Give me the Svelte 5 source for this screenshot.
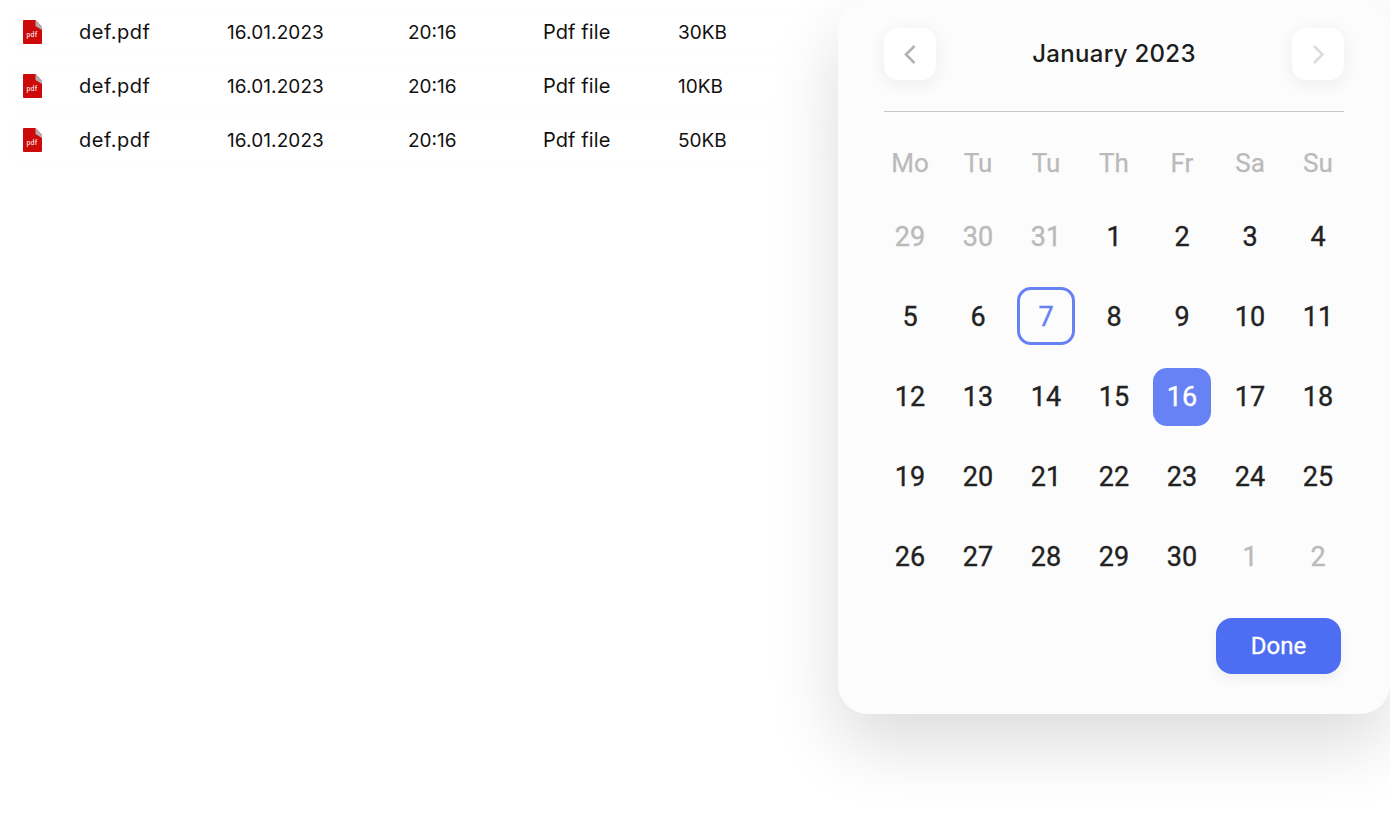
<script lang="ts">
    const files = [
        { name: "def.pdf", date: "16.01.2023", time: "20:16", type: "Pdf file", size: "30KB" },
        { name: "def.pdf", date: "16.01.2023", time: "20:16", type: "Pdf file", size: "10KB" },
        { name: "def.pdf", date: "16.01.2023", time: "20:16", type: "Pdf file", size: "50KB" }
    ];
    const weekdays = ["Mo", "Tu", "Tu", "Th", "Fr", "Sa", "Su"];
    const days = [
        { n: 29, muted: true }, { n: 30, muted: true }, { n: 31, muted: true },
        ...Array.from({ length: 30 }, (_, i) => ({ n: i + 1, muted: false })),
        { n: 1, muted: true }, { n: 2, muted: true }
    ];
</script>

<div class="page">
    <div class="files">
        {#each files as file}
            <div class="row">
                <span class="icon">
                    <svg width="19" height="24" viewBox="0 0 19 24">
                        <path d="M1 0H12.5L19 7V23a1 1 0 0 1-1 1H1a1 1 0 0 1-1-1V1a1 1 0 0 1 1-1Z" fill="#cd0a0a"/>
                        <path d="M12.5 0L19 7V10L12.5 6Z" fill="#b5aeae"/>
                        <text x="9" y="16.5" class="pdf">pdf</text>
                    </svg>
                </span>
                <span class="name">{file.name}</span>
                <span class="date">{file.date}</span>
                <span class="time">{file.time}</span>
                <span class="type">{file.type}</span>
                <span>{file.size}</span>
            </div>
        {/each}
    </div>

    <div class="calendar">
        <div class="head">
            <button class="nav prev" aria-label="Previous month">
                <svg width="14" height="20" viewBox="0 0 14 20"><path d="M11.5 2L3 10.5L11.5 19" /></svg>
            </button>
            <div class="title">January 2023</div>
            <button class="nav next" aria-label="Next month">
                <svg width="14" height="20" viewBox="0 0 14 20"><path d="M3 2L11.5 10.5L3 19" /></svg>
            </button>
        </div>
        <div class="weekdays">
            {#each weekdays as d}
                <span>{d}</span>
            {/each}
        </div>
        <div class="days">
            {#each days as day}
                <span
                    class="day"
                    class:muted={day.muted}
                    class:today={!day.muted && day.n === 7}
                    class:selected={!day.muted && day.n === 16}
                >{day.n}</span>
            {/each}
        </div>
        <div class="foot">
            <button class="done">Done</button>
        </div>
    </div>
</div>

<style>
    :global(body) {
        background: #fff;
        overflow: hidden;
    }

    .page {
        display: flex;
        justify-content: space-between;
        align-items: flex-start;
        width: 1390px;
        height: 828px;
        overflow: hidden;
    }

    .files {
        display: flex;
        flex-direction: column;
        gap: 10px;
        padding: 10px 0 0 10px;
        font-family: "Inter", sans-serif;
        font-size: 19px;
        color: #111;
    }

    .row {
        box-sizing: border-box;
        display: flex;
        align-items: center;
        width: 817px;
        height: 44px;
        padding-left: 12px;
        border: 1px solid #fdfdfd;
        border-radius: 16px;
    }

    .row span {
        white-space: nowrap;
    }

    .icon {
        display: flex;
        width: 56px;
    }

    .pdf {
        font-family: "Roboto", sans-serif;
        font-size: 7px;
        font-weight: 500;
        letter-spacing: 0.3px;
        fill: #f7dcdc;
        text-anchor: middle;
    }

    .name { width: 148px; font-size: 20px; letter-spacing: 0.5px; }
    .date { width: 181px; letter-spacing: 0.1px; }
    .time { width: 135px; }
    .type { width: 135px; font-size: 20px; letter-spacing: 0.1px; }

    .calendar {
        box-sizing: border-box;
        width: 552px;
        height: 714px;
        padding: 28px 46px 0;
        background: #fcfcfd;
        border-radius: 30px;
        box-shadow: 0 30px 70px rgba(0, 0, 0, 0.14);
        font-family: "Roboto", sans-serif;
    }

    .head {
        display: flex;
        align-items: flex-start;
        justify-content: space-between;
        height: 83px;
        border-bottom: 1px solid #c6c6cb;
    }

    .nav {
        display: flex;
        align-items: center;
        justify-content: center;
        width: 52px;
        height: 52px;
        padding: 0;
        border: none;
        border-radius: 14px;
        background: #fff;
        box-shadow: 0 4px 16px 2px rgba(0, 0, 0, 0.05);
    }

    .nav path {
        fill: none;
        stroke-width: 2.6;
    }

    .prev path { stroke: #b3b3b3; }
    .next path { stroke: #dcdcdf; }

    .title {
        height: 52px;
        line-height: 52px;
        font-family: "Inter", sans-serif;
        font-size: 24px;
        font-weight: 450;
        letter-spacing: 0.3px;
        color: #1c1c1c;
    }

    .weekdays, .days {
        display: grid;
        grid-template-columns: repeat(7, 58px);
        column-gap: 10px;
        margin: 0 -3px;
    }

    .weekdays {
        margin-top: 22px;
        height: 58px;
        align-items: center;
        justify-items: center;
        font-size: 26px;
        -webkit-text-stroke: 0.25px currentColor;
        color: #bababa;
    }

    .days {
        row-gap: 22px;
        margin-top: 16px;
    }

    .day {
        box-sizing: border-box;
        display: flex;
        align-items: center;
        justify-content: center;
        height: 58px;
        border-radius: 14px;
        font-size: 27px;
        -webkit-text-stroke: 0.35px currentColor;
        color: #222;
    }

    .muted {
        color: #bababa;
    }

    .today {
        margin: -1px 0 1px;
        padding-top: 2px;
        border: 3px solid #6782f5;
        color: #6782f5;
    }

    .selected {
        background: #6782f5;
        color: #fff;
    }

    .foot {
        display: flex;
        justify-content: flex-end;
        margin-top: 32px;
        padding-right: 3px;
    }

    .done {
        width: 125px;
        height: 56px;
        border: none;
        border-radius: 16px;
        background: #4d6ef2;
        color: #fff;
        font-family: "Roboto", sans-serif;
        font-size: 24px;
        -webkit-text-stroke: 0.3px currentColor;
        box-shadow: 0 6px 12px rgba(0, 0, 0, 0.05);
    }
</style>
